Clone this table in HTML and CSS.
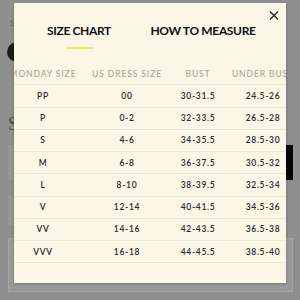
FILE: index.html
```html
<!DOCTYPE html>
<html lang="en">
<head>
  <meta charset="UTF-8">
  <meta name="viewport" content="width=device-width, initial-scale=1.0">
  <title>Size Chart</title>
  <link rel="stylesheet" href="styles.css">
</head>
<body>
  <!-- Page behind the dimmed overlay -->
  <div class="page">
    <div class="page-label">S</div>
    <div class="avatar"></div>
    <div class="page-heading">S</div>
    <div class="page-row">
      <div class="field"></div>
      <div class="side-tab"></div>
    </div>
    <div class="page-row short">
      <div class="field"></div>
    </div>
    <div class="panel"></div>
  </div>

  <!-- Size chart modal -->
  <div class="modal">
    <button class="close" aria-label="Close">
      <svg width="10" height="9" viewBox="0 0 10 9">
        <path d="M1 0.5 L9 8.5 M9 0.5 L1 8.5" stroke="#1c1c1c" stroke-width="1.2" fill="none"/>
      </svg>
    </button>

    <div class="tabs">
      <div class="tab active">SIZE CHART</div>
      <div class="tab">HOW TO MEASURE</div>
    </div>

    <div class="table-wrap">
      <div class="size-table">
        <div class="row head">
          <div>MONDAY SIZE</div>
          <div>US DRESS SIZE</div>
          <div>BUST</div>
          <div>UNDER BUST</div>
        </div>
        <div class="row"><div>PP</div><div>00</div><div>30-31.5</div><div>24.5-26</div></div>
        <div class="row"><div>P</div><div>0-2</div><div>32-33.5</div><div>26.5-28</div></div>
        <div class="row"><div>S</div><div>4-6</div><div>34-35.5</div><div>28.5-30</div></div>
        <div class="row"><div>M</div><div>6-8</div><div>36-37.5</div><div>30.5-32</div></div>
        <div class="row"><div>L</div><div>8-10</div><div>38-39.5</div><div>32.5-34</div></div>
        <div class="row"><div>V</div><div>12-14</div><div>40-41.5</div><div>34.5-36</div></div>
        <div class="row"><div>VV</div><div>14-16</div><div>42-43.5</div><div>36.5-38</div></div>
        <div class="row"><div>VVV</div><div>16-18</div><div>44-45.5</div><div>38.5-40</div></div>
      </div>
    </div>
  </div>
</body>
</html>
```

FILE: styles.css
```css
body {
  margin: 0;
  width: 300px;
  height: 300px;
  overflow: hidden;
  background-color: #8f8f8f;
  font-family: Lato, "Open Sans", Arial, sans-serif;
  position: relative;
}

/* Dimmed page */
.page {
  padding: 18px 7px 0 8px;
}

.page-label {
  font-size: 8px;
  line-height: 10px;
  color: #656565;
  padding-left: 2px;
}

.avatar {
  width: 20px;
  height: 20px;
  margin-top: 14px;
  border-radius: 50%;
  background-color: #1b1b1b;
  margin-left: -1px;
}

.page-heading {
  margin-top: 52px;
  font-family: "Liberation Serif", serif;
  font-size: 18px;
  line-height: 20px;
  color: #4c4c4c;
}

.page-row {
  display: flex;
  justify-content: space-between;
  margin-top: 11px;
  height: 35px;
}

.page-row.short {
  margin-top: 16px;
  height: 29px;
}

.field {
  width: 40px;
  background-color: #979797;
}

.side-tab {
  width: 7px;
  background-color: #050505;
}

.panel {
  margin-top: 13px;
  height: 52px;
  background-color: #9a9a9a;
  border: 1px solid #a3a3a3;
}

/* Modal */
.modal {
  position: absolute;
  top: 3px;
  left: 14px;
  width: 272px;
  height: 280px;
  background-color: #fbf6e5;
  overflow: hidden;
  box-shadow: 0 1px 3px rgba(0, 0, 0, 0.25);
}

.close {
  position: absolute;
  top: 8px;
  right: 7px;
  padding: 0;
  border: none;
  background: transparent;
  width: 10px;
  height: 9px;
  line-height: 0;
  cursor: pointer;
}

.tabs {
  display: grid;
  grid-template-columns: 124px 124px;
  padding: 20px 0 0 3px;
}

.tab {
  text-align: center;
  font-size: 12px;
  line-height: 16px;
  font-weight: 700;
  color: #111;
  letter-spacing: -0.35px;
}

.tab.active::after {
  content: "";
  display: block;
  width: 27px;
  height: 2px;
  margin: 8px auto 0;
  background-color: #efe95c;
}

.table-wrap {
  margin-top: 14px;
}

.size-table {
  margin-left: -14px;
  width: 298px;
}

.row {
  display: grid;
  grid-template-columns: 86px 82px 60px 70px;
  height: 22.25px;
  align-items: center;
  border-bottom: 1px solid #ede7d4;
  box-sizing: border-box;
  font-size: 8.5px;
  letter-spacing: 0.7px;
  color: #2a2a2a;
  font-weight: 600;
}

.row > div {
  text-align: center;
  white-space: nowrap;
}

.row.head {
  color: #aba698;
  font-weight: 500;
  letter-spacing: 0.9px;
}
```
